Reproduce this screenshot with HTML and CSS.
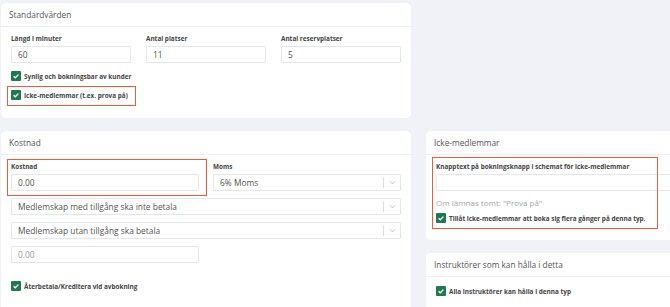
FILE: index.html
```html
<!DOCTYPE html>
<html lang="sv">
<head>
  <meta charset="UTF-8">
  <meta name="viewport" content="width=device-width, initial-scale=1.0">
  <title>Passtyp</title>
  <link rel="stylesheet" href="styles.css">
</head>
<body>

<div class="page">
  <section class="card card-std">
    <div class="card-header">Standardvärden</div>
    <div class="card-body">
      <div class="row-3">
        <div class="field">
          <label class="label">Längd i minuter</label>
          <div class="input">60</div>
        </div>
        <div class="field">
          <label class="label">Antal platser</label>
          <div class="input">11</div>
        </div>
        <div class="field">
          <label class="label">Antal reservplatser</label>
          <div class="input">5</div>
        </div>
      </div>
      <div class="check check-first"><span class="box"><svg viewBox="0 0 10 10"><polyline points="2.6,5.2 4.3,6.8 7.4,3.6"/></svg></span>Synlig och bokningsbar av kunder</div>
      <div class="check check-second"><span class="box"><svg viewBox="0 0 10 10"><polyline points="2.6,5.2 4.3,6.8 7.4,3.6"/></svg></span>Icke-medlemmar (t.ex. prova på)</div>
    </div>
    <div class="mark mark-std"></div>
  </section>

  <section class="card card-cost">
    <div class="card-header">Kostnad</div>
    <div class="card-body">
      <div class="row-2">
        <div class="field">
          <label class="label">Kostnad</label>
          <div class="input">0.00</div>
        </div>
        <div class="field">
          <label class="label">Moms</label>
          <div class="select"><span>6% Moms</span><span class="sep"></span><svg class="chev" viewBox="0 0 8 5"><polyline points="1,1 4,4 7,1"/></svg></div>
        </div>
      </div>
      <div class="select select-wide"><span>Medlemskap med tillgång ska inte betala</span><span class="sep"></span><svg class="chev" viewBox="0 0 8 5"><polyline points="1,1 4,4 7,1"/></svg></div>
      <div class="select select-wide"><span>Medlemskap utan tillgång ska betala</span><span class="sep"></span><svg class="chev" viewBox="0 0 8 5"><polyline points="1,1 4,4 7,1"/></svg></div>
      <div class="input input-half input-muted">0.00</div>
      <div class="check check-refund"><span class="box"><svg viewBox="0 0 10 10"><polyline points="2.6,5.2 4.3,6.8 7.4,3.6"/></svg></span>Återbetala/Kreditera vid avbokning</div>
    </div>
    <div class="mark mark-cost"></div>
  </section>

  <div class="side">
    <section class="card card-guest">
      <div class="card-header">Icke-medlemmar</div>
      <div class="card-body">
        <label class="label">Knapptext på bokningsknapp i schemat för icke-medlemmar</label>
        <div class="input input-long"></div>
        <div class="help">Om lämnas tomt: "Prova på"</div>
        <div class="check check-guest"><span class="box"><svg viewBox="0 0 10 10"><polyline points="2.6,5.2 4.3,6.8 7.4,3.6"/></svg></span>Tillåt icke-medlemmar att boka sig flera gånger på denna typ.</div>
      </div>
      <div class="mark mark-guest"></div>
    </section>

    <section class="card card-staff">
      <div class="card-header">Instruktörer som kan hålla i detta</div>
      <div class="card-body">
        <div class="check"><span class="box"><svg viewBox="0 0 10 10"><polyline points="2.6,5.2 4.3,6.8 7.4,3.6"/></svg></span>Alla instruktörer kan hålla i denna typ</div>
      </div>
    </section>
  </div>
</div>

</body>
</html>
```

FILE: styles.css
```css
body {
  margin: 0;
  background: #f0f2f7;
  font-family: "Open Sans", "Liberation Sans", sans-serif;
  color: #555;
  overflow: hidden;
}

.page {
  display: grid;
  grid-template-columns: 410px 300px;
  column-gap: 15px;
  row-gap: 13px;
  align-items: start;
  padding: 3px 0 0 1px;
}

.card {
  position: relative;
  background: #fff;
  border-radius: 5px;
}

.card-std {
  grid-column: 1;
  height: 115px;
}

.card-cost {
  grid-column: 1;
  height: 200px;
}

.side {
  grid-column: 2;
  display: flex;
  flex-direction: column;
  gap: 13px;
}

.card-header {
  height: 23px;
  line-height: 23px;
  padding: 0 8px;
  font-size: 8.3px;
  color: #555;
  border-bottom: 1px solid #eef0f4;
}

.card-body {
  padding: 8px 10px 0 10px;
}

.row-3 {
  display: grid;
  grid-template-columns: repeat(3, 1fr);
  gap: 15px;
}

.row-2 {
  display: grid;
  grid-template-columns: 188px 188px;
  gap: 14px;
  margin-bottom: 7px;
}

.label {
  display: block;
  font-size: 6.4px;
  font-weight: 700;
  color: #444;
  line-height: 8px;
  margin-bottom: 3px;
}

.input, .select {
  box-sizing: border-box;
  height: 17px;
  border: 1px solid #e4e6ea;
  border-radius: 1px;
  padding: 0 6px;
  font-size: 8.4px;
  line-height: 15px;
  color: #555;
}

.input-half {
  width: 188px;
}

.input-muted {
  color: #9a9da2;
}

.input-long {
  width: 260px;
}

.select {
  display: flex;
  align-items: center;
  padding-right: 4px;
}

.select span:first-child {
  flex: 1;
}

.select-wide {
  margin-bottom: 7px;
}

.sep {
  width: 1px;
  height: 10px;
  background: #d9dbe0;
  margin-right: 5px;
}

.chev {
  width: 7px;
  height: 5px;
  fill: none;
  stroke: #b5b8be;
  stroke-width: 1;
}

.check {
  display: flex;
  align-items: center;
  font-size: 6.4px;
  font-weight: 700;
  color: #444;
  height: 10px;
}

.box {
  width: 10px;
  height: 10px;
  background: #1f7a54;
  border-radius: 1px;
  margin-right: 3px;
  display: flex;
}

.box svg {
  width: 10px;
  height: 10px;
  fill: none;
  stroke: #fff;
  stroke-width: 1.3;
}

.check-first {
  margin-top: 8px;
}

.check-second {
  margin-top: 9px;
}

.check-refund {
  margin-top: 18px;
}

.help {
  font-size: 8px;
  color: #a5a8ad;
  margin-top: 7px;
  line-height: 10px;
}

.check-guest {
  margin-top: 5px;
}

.card-guest {
  height: 109px;
}

.card-staff .card-body {
  padding-top: 9px;
  height: 40px;
}

.mark {
  position: absolute;
  left: 6px;
  border: 1px solid #ee5b3b;
  box-sizing: border-box;
}

.mark-std {
  top: 83px;
  width: 129px;
  height: 20px;
}

.mark-cost {
  top: 28px;
  width: 200px;
  height: 37px;
}

.mark-guest {
  top: 26px;
  width: 226px;
  height: 72px;
}
```
